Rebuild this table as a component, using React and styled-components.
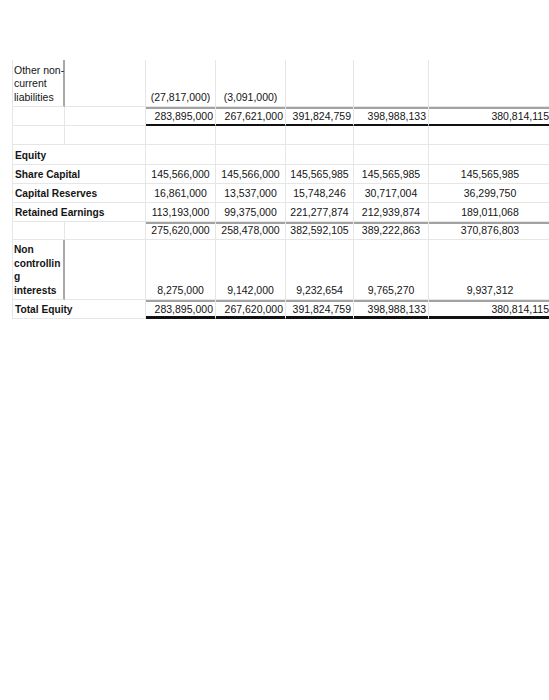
import React from "react";
import styled, { createGlobalStyle } from "styled-components";

const Global = createGlobalStyle`
  html, body { margin: 0; padding: 0; background: #fff; overflow: hidden; }
  body { width: 549px; height: 700px; }
`;

const Page = styled.div`
  width: 549px;
  height: 700px;
  overflow: hidden;
  padding-top: 60px;
  box-sizing: border-box;
`;

const Sheet = styled.div`
  margin-left: 12px;
  display: grid;
  grid-template-columns: 52px 81px 70px 70px 68px 75px 123px;
  grid-template-rows: 47px 19px 19px 20px 19px 19px 19px 18px 60px 19px;
  border-left: 1px solid #e6e6e6;
  font-family: "Liberation Sans", Arial, Helvetica, sans-serif;
  font-size: 10.5px;
  line-height: 13.5px;
  color: #141414;
`;

const Cell = styled.div`
  box-sizing: border-box;
  grid-column: span ${(p) => p.$span || 1};
  display: flex;
  flex-direction: column;
  justify-content: flex-end;
  border-right: ${(p) => (p.$divider ? "2px solid #a8a8a8" : "1px solid #e6e6e6")};
  border-bottom: 1px solid ${(p) => (p.$bottom ? "#111" : "#e6e6e6")};
  box-shadow: ${(p) => {
    const s = [];
    if (p.$top) s.push("inset 0 2px 0 #a2a2a2");
    if (p.$bottom) s.push(`inset 0 -${p.$bottom - 1}px 0 #111`);
    return s.length ? s.join(", ") : "none";
  }};
  padding: 0 ${(p) => (p.$align === "right" ? "2px" : "2px")} 2px 2px;
  text-align: ${(p) => p.$align || "left"};
  font-weight: ${(p) => (p.$bold ? 700 : 400)};
  white-space: nowrap;
`;

const Label = styled(Cell)`
  padding-left: ${(p) => (p.$tight ? "1px" : "2px")};
  font-size: ${(p) => (p.$bold ? "10.2px" : "10.5px")};
`;

const ValueRow = ({ values, align = "center", top, bottom }) =>
  values.map((v, i) => (
    <Cell key={i} $align={align} $top={top} $bottom={bottom}>
      {v}
    </Cell>
  ));

export default function App() {
  return (
    <>
      <Global />
      <Page>
        <Sheet>
          {/* Other non-current liabilities */}
          <Label $divider $tight>
            Other non-
            <br />
            current
            <br />
            liabilities
          </Label>
          <Cell />
          <ValueRow values={["(27,817,000)", "(3,091,000)", "", "", ""]} />

          {/* Total liabilities */}
          <Cell />
          <Cell />
          <ValueRow
            values={["283,895,000", "267,621,000", "391,824,759", "398,988,133", "380,814,115"]}
            align="right"
            top
            bottom={2}
          />

          {/* blank */}
          <Cell />
          <Cell />
          <ValueRow values={["", "", "", "", ""]} />

          {/* Equity */}
          <Label $span={2} $bold>
            Equity
          </Label>
          <ValueRow values={["", "", "", "", ""]} />

          <Label $span={2} $bold>
            Share Capital
          </Label>
          <ValueRow
            values={["145,566,000", "145,566,000", "145,565,985", "145,565,985", "145,565,985"]}
          />

          <Label $span={2} $bold>
            Capital Reserves
          </Label>
          <ValueRow
            values={["16,861,000", "13,537,000", "15,748,246", "30,717,004", "36,299,750"]}
          />

          <Label $span={2} $bold>
            Retained Earnings
          </Label>
          <ValueRow
            values={["113,193,000", "99,375,000", "221,277,874", "212,939,874", "189,011,068"]}
          />

          {/* subtotal */}
          <Cell />
          <Cell />
          <ValueRow
            values={["275,620,000", "258,478,000", "382,592,105", "389,222,863", "370,876,803"]}
            top
          />

          {/* Non controlling interests */}
          <Label $divider $tight $bold>
            Non
            <br />
            controllin
            <br />
            g
            <br />
            interests
          </Label>
          <Cell />
          <ValueRow
            values={["8,275,000", "9,142,000", "9,232,654", "9,765,270", "9,937,312"]}
          />

          {/* Total Equity */}
          <Label $span={2} $bold>
            Total Equity
          </Label>
          <ValueRow
            values={["283,895,000", "267,620,000", "391,824,759", "398,988,133", "380,814,115"]}
            align="right"
            top
            bottom={3}
          />
        </Sheet>
      </Page>
    </>
  );
}
